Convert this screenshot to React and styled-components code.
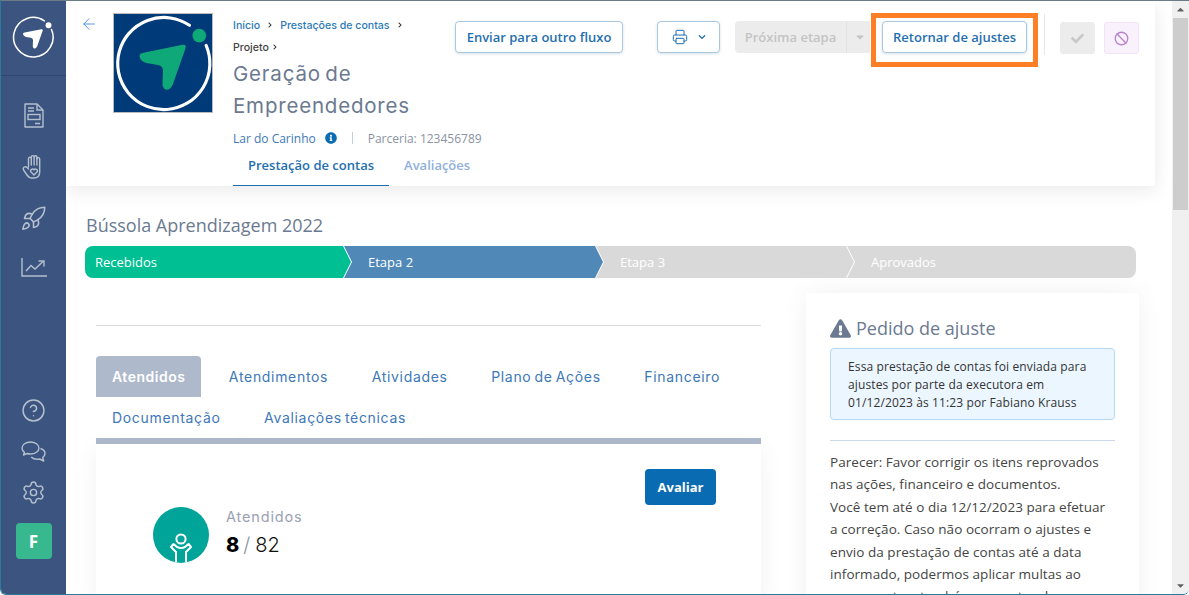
import React from "react";
import styled, { createGlobalStyle } from "styled-components";
import { ArrowLeft, Printer, Rocket, CircleHelp, Settings, Ban } from "lucide-react";
import { FaCheck, FaChevronDown, FaChevronRight, FaCaretDown, FaCaretUp, FaInfoCircle, FaExclamationTriangle } from "react-icons/fa";

const GlobalStyle = createGlobalStyle`
  html, body {
    margin: 0;
    background: #fff;
    font-family: "Open Sans", "Liberation Sans", sans-serif;
  }
  * { box-sizing: border-box; }
`;

const headingFont = `Inter, "Open Sans", sans-serif`;

const Frame = styled.div`
  display: flex;
  height: 100vh;
  overflow: hidden;
  border-top: 1px solid #6b7c85;
  border-left: 1px solid #2a7a9b;
  border-bottom: 1px solid #2a7a9b;
  border-radius: 0 0 6px 6px;
`;

const Sidebar = styled.aside`
  flex: 0 0 65px;
  display: flex;
  flex-direction: column;
  align-items: center;
  background: #3b5580;
  color: #b5bfce;
`;

const SideLogo = styled.div`
  width: 100%;
  height: 75px;
  flex: none;
  display: flex;
  align-items: center;
  justify-content: center;
  padding: 0 1px 2px 0;
  border-bottom: 1px solid #2f4670;
`;

const SideNav = styled.nav`
  display: flex;
  flex-direction: column;
  align-items: center;
  gap: 26px;
  padding-top: 27px;
`;

const SideFoot = styled.div`
  margin-top: auto;
  display: flex;
  flex-direction: column;
  align-items: center;
  gap: 18px;
  padding-bottom: 35px;
`;

const Avatar = styled.div`
  width: 36px;
  height: 36px;
  border-radius: 4px;
  background: #38b88f;
  color: #fff;
  font-weight: 700;
  font-size: 17px;
  display: flex;
  align-items: center;
  justify-content: center;
`;

const Main = styled.main`
  flex: 1;
  min-width: 0;
  overflow: hidden;
`;

const Header = styled.header`
  width: 1089px;
  height: 185px;
  display: flex;
  padding-left: 14px;
  background: #fff;
  box-shadow: 0 4px 18px rgba(0, 0, 0, 0.09);
`;

const BackButton = styled.button`
  flex: 0 0 33px;
  height: 32px;
  padding: 14px 0 0 0;
  border: 0;
  background: none;
  color: #3f8fd8;
  text-align: left;
`;

const LogoBox = styled.div`
  flex: none;
  width: 100px;
  height: 100px;
  margin-top: 12px;
  border: 1px solid #bbb;
  background: #003a78;
`;

const Info = styled.div`
  flex: 0 0 222px;
  min-width: 0;
  margin-left: 20px;
  padding-top: 13px;
  white-space: nowrap;
`;

const Crumbs = styled.div`
  display: flex;
  align-items: center;
  gap: 7px;
  height: 22px;
  font-family: ${headingFont};
  font-size: 10.6px;
  font-weight: 500;
  color: ${(p) => (p.$dark ? "#444" : "#2c7ab8")};

  svg { color: #333; }
`;

const ProjectTitle = styled.h1`
  margin: 0;
  font-family: ${headingFont};
  font-size: 20.5px;
  line-height: 32px;
  font-weight: 400;
  letter-spacing: 0.8px;
  word-spacing: -2px;
  color: #6b7a90;
`;

const SubLine = styled.div`
  display: flex;
  align-items: center;
  height: 18px;
  margin-top: 7px;
  font-size: 12px;
  color: #3d78b8;

  svg { flex: none; color: #0c6cb3; margin-left: 9px; }
`;

const SubDivider = styled.span`
  flex: none;
  width: 1px;
  height: 12px;
  margin: 0 15px;
  background: #c3cfdc;
`;

const Partner = styled.span`
  flex: none;
  color: #8a93a3;
`;

const HeaderTabs = styled.div`
  display: flex;
  margin-top: 8px;
`;

const HeaderTab = styled.div`
  flex: none;
  height: 31px;
  padding: 0 15px;
  font-size: 13px;
  line-height: 20px;
  font-weight: 600;
  color: ${(p) => (p.$active ? "#1f6fb0" : "#8fb0dc")};
  border-bottom: ${(p) => (p.$active ? "1px solid #1f6fb0" : "0")};
`;

const Actions = styled.div`
  display: flex;
  align-items: flex-start;
  padding-top: 20px;
`;

const OutlineButton = styled.button`
  position: relative;
  height: 32px;
  width: ${(p) => p.$width}px;
  margin-left: ${(p) => p.$gap || 0}px;
  padding: 0;
  display: flex;
  align-items: center;
  justify-content: center;
  gap: 10px;
  font-family: inherit;
  font-size: 13px;
  font-weight: 600;
  white-space: nowrap;
  color: #1f6fb0;
  background: #fff;
  border: 1px solid #a9c8e0;
  border-radius: 4px;
  box-shadow: 0 1px 3px rgba(60, 100, 140, 0.2);
`;

const Highlight = styled.span`
  position: absolute;
  left: -12px;
  right: -12px;
  top: -9px;
  bottom: -15px;
  border: 5px solid #ff7f27;
  pointer-events: none;
`;

const SplitButton = styled.div`
  display: flex;
  height: 32px;
  width: 135px;
  margin-left: 15px;
  background: #ececec;
  border-radius: 4px 0 0 4px;
  color: #c4c4c4;
  font-size: 13px;
  font-weight: 600;
`;

const SplitLabel = styled.span`
  flex: 0 0 112px;
  display: flex;
  align-items: center;
  justify-content: center;
  border-right: 1px solid #e2e2e2;
`;

const SplitCaret = styled.span`
  flex: 1;
  display: flex;
  align-items: center;
  padding-left: 7px;
`;

const ActionDivider = styled.span`
  width: 1px;
  height: 41px;
  margin: -7px 15px 0 17px;
  background: #e4e9ee;
`;

const SquareButton = styled.button`
  width: 35px;
  height: 32px;
  margin: 1px 0 0 ${(p) => p.$gap || 0}px;
  padding: 0;
  display: flex;
  align-items: center;
  justify-content: center;
  border-radius: 3px;
  border: 1px solid ${(p) => (p.$purple ? "#f0e4f6" : "#ececec")};
  background: ${(p) => (p.$purple ? "#f9f2fd" : "#ececec")};
  color: ${(p) => (p.$purple ? "#b884cf" : "#c8c8c8")};
`;

const Content = styled.div`
  padding: 27px 0 0 19px;
`;

const PageTitle = styled.h2`
  margin: 0 0 9px 1px;
  font-size: 18px;
  line-height: 24px;
  font-weight: 400;
  color: #6b7a90;
`;

const Progress = styled.div`
  display: flex;
  width: 1051px;
  height: 32px;
`;

const Step = styled.div`
  position: relative;
  flex: 0 0 ${(p) => p.$width}px;
  display: flex;
  align-items: center;
  padding-left: ${(p) => (p.$first ? 10 : 25)}px;
  font-size: 13px;
  color: #fff;
  background: ${(p) => p.$color};
  border-radius: ${(p) => (p.$first ? "8px 0 0 8px" : p.$last ? "0 8px 8px 0" : "0")};

  ${(p) =>
    !p.$last &&
    `
    &::before, &::after {
      content: "";
      position: absolute;
      top: 0;
      height: 100%;
      z-index: 1;
    }
    &::before {
      left: 100%;
      width: 9px;
      background: #fff;
      clip-path: polygon(0 0, 1px 0, 9px 50%, 1px 100%, 0 100%);
    }
    &::after {
      left: 100%;
      width: 8px;
      background: ${p.$color};
      clip-path: polygon(0 0, 100% 50%, 0 100%);
    }
  `}
`;

const Columns = styled.div`
  display: flex;
  gap: 45px;
  padding: 15px 0 0 11px;
`;

const LeftColumn = styled.section`
  flex: 0 0 665px;
  padding-top: 32px;
`;

const Rule = styled.hr`
  margin: ${(p) => p.$top || 0}px 0 0;
  border: 0;
  border-top: 1px solid ${(p) => p.$color || "#dddddd"};
`;

const Tabs = styled.div`
  display: flex;
  flex-wrap: wrap;
  column-gap: 11.5px;
  margin-top: 30px;
  border-bottom: 6px solid #aeb9cb;
`;

const Tab = styled.div`
  height: 41px;
  padding: 0 16px;
  display: flex;
  align-items: center;
  font-family: ${headingFont};
  font-size: 14px;
  letter-spacing: ${(p) => (p.$active ? 0.5 : 0.68)}px;
  word-spacing: -1.5px;
  font-weight: ${(p) => (p.$active ? 600 : 400)};
  color: ${(p) => (p.$active ? "#fff" : "#3d78b8")};
  background: ${(p) => (p.$active ? "#aeb9cb" : "#fff")};
  border-radius: 4px 4px 0 0;
`;

const Panel = styled.div`
  height: 160px;
  padding: 25px 45px 0 57px;
  background: #fff;
  box-shadow: 0 6px 24px rgba(0, 0, 0, 0.06);
`;

const PanelTop = styled.div`
  display: flex;
  justify-content: flex-end;
`;

const PrimaryButton = styled.button`
  width: 71px;
  height: 36px;
  border: 0;
  border-radius: 4px;
  background: #096cb3;
  color: #fff;
  font-family: inherit;
  font-size: 13px;
  font-weight: 700;
`;

const Stat = styled.div`
  display: flex;
  align-items: center;
  gap: 17px;
  margin-top: 2px;
`;

const StatIcon = styled.div`
  width: 56px;
  height: 56px;
  border-radius: 50%;
  background: #00a499;
  overflow: hidden;
`;

const StatText = styled.div`
  margin-top: -4px;
`;

const StatLabel = styled.div`
  font-family: ${headingFont};
  font-size: 14.5px;
  letter-spacing: 0.85px;
  color: #9a9fb5;
`;

const StatValue = styled.div`
  margin-top: 6px;
  font-family: ${headingFont};
  font-size: 20px;
  line-height: 28px;
  font-weight: 300;
  color: #111;

  b { font-weight: 800; color: #000; }
  i { font-style: normal; color: #8a93a3; margin: 0 5px 0 4px; }
`;

const AdjustCard = styled.aside`
  flex: 0 0 333px;
  height: 340px;
  padding: 23px 24px;
  border-radius: 4px;
  background: #fff;
  box-shadow: 0 0 28px rgba(0, 0, 0, 0.06);
`;

const AdjustTitle = styled.h3`
  margin: 0 0 8px;
  display: flex;
  align-items: center;
  gap: 5px;
  height: 24px;
  font-size: 18px;
  font-weight: 400;
  color: #6b7a90;
`;

const Notice = styled.div`
  height: 72px;
  padding: 9px 10px 0 17px;
  font-size: 12px;
  line-height: 18px;
  letter-spacing: 0.12px;
  color: #333;
  background: #ebf6ff;
  border: 1px solid #b9d7f0;
  border-radius: 4px;
`;

const Opinion = styled.p`
  margin: 10px 0 0;
  font-size: 13.5px;
  line-height: 22.4px;
  letter-spacing: 0.05px;
  color: #444;
`;

const Scrollbar = styled.div`
  flex: 0 0 17px;
  display: flex;
  flex-direction: column;
  align-items: center;
  background: #f0f0f0;
  color: #606060;
`;

const ScrollArrow = styled.div`
  flex: none;
  height: 17px;
  display: flex;
  align-items: center;
  justify-content: center;
`;

const ScrollThumb = styled.div`
  flex: 0 0 192px;
  width: 15px;
  background: #cdcdcd;
`;

const ScrollTrack = styled.div`
  flex: 1;
`;

function BrandMark({ size, ring, arrow, dot, width }) {
  return (
    <svg width={size} height={size} viewBox="0 0 100 100" style={{ display: "block" }}>
      <path
        d="M77 11.5A47 47 0 1 0 94 32"
        fill="none"
        stroke={ring}
        strokeWidth={width}
        strokeLinecap="round"
      />
      <circle cx="87" cy="22" r="7" fill={dot} />
      <path
        d="M26 43Q26 40 30 39.5L70 31.5Q74 31 73 35L60 72Q56 80 51 76Q49 74 49.5 70L50 58Q50 53 45 52L33 50Q27 48 26 43Z"
        fill={arrow}
      />
    </svg>
  );
}

const DocIcon = () => (
  <svg width="20" height="25" viewBox="0 0 20 25" fill="none" stroke="currentColor" strokeWidth="1.4">
    <path d="M1 1H13L19 7V24H1Z" strokeLinejoin="round" />
    <path d="M13 1V7H19M4 5H10M4 8H10" />
    <rect x="4" y="11.5" width="12" height="5" />
    <path d="M11 20.5H16" />
  </svg>
);

const HandIcon = () => (
  <svg width="23" height="25" viewBox="0 0 23 25" fill="none" stroke="currentColor" strokeWidth="1.4" strokeLinejoin="round" strokeLinecap="round">
    <path d="M6.5 13V4.5a1.4 1.4 0 0 1 2.8 0V3a1.4 1.4 0 0 1 2.8 0V3.2a1.4 1.4 0 0 1 2.8 0V5a1.4 1.4 0 0 1 2.8 0V18q0 6-6 6H10q-3 0-5-3L1.6 16q-1-2 .6-3 1.5-.8 2.8.6L6.5 15" />
    <path d="M9.3 4.5V11M12.1 3V11M14.9 3.2V11" />
    <path d="M12 21l-3.2-3.2a1.8 1.8 0 0 1 3.2-1.8 1.8 1.8 0 0 1 3.2 1.8Z" />
  </svg>
);

const ChartIcon = () => (
  <svg width="26" height="19" viewBox="0 0 26 19" fill="none" stroke="currentColor" strokeWidth="1.4">
    <path d="M1 0V18H26" />
    <path d="M5 13L10 7.5L14 11L22 3.5" />
    <path d="M17.5 3H23V8.5" />
  </svg>
);

const ChatIcon = () => (
  <svg width="25" height="21" viewBox="0 0 25 21" fill="none" stroke="currentColor" strokeWidth="1.4" strokeLinejoin="round">
    <path d="M9.5 1C4.8 1 1 3.6 1 7c0 1.7 1 3.2 2.4 4.3L2.5 14l3.6-1.5c1.1.4 2.2.5 3.4.5 4.7 0 8.5-2.6 8.5-6S14.2 1 9.5 1Z" />
    <path d="M19.5 7.5c2.6 1 4.5 2.8 4.5 5 0 1.6-.9 3-2.3 4l1 3.5-4-2c-.8.2-1.6.3-2.5.3-2.5 0-4.7-.9-6-2.3" />
  </svg>
);

const PersonIcon = () => (
  <svg width="56" height="56" viewBox="0 0 56 56" fill="none" stroke="#fff" strokeWidth="2" strokeLinejoin="round" style={{ display: "block" }}>
    <circle cx="28" cy="32" r="4.6" />
    <path d="M23 56V45L18 40L20.5 37L24 40Q28 42 32 40L35.5 37L38 40L33 45V56" />
  </svg>
);

const App = () => {
  return (
    <>
      <GlobalStyle />
      <Frame>
        <Sidebar>
          <SideLogo>
            <BrandMark size={42} ring="#fff" arrow="#fff" dot="#fff" width={3.6} />
          </SideLogo>
          <SideNav>
            <DocIcon />
            <HandIcon />
            <Rocket size={27} strokeWidth={1.4} />
            <ChartIcon />
          </SideNav>
          <SideFoot>
            <CircleHelp size={25} strokeWidth={1.4} />
            <ChatIcon />
            <Settings size={25} strokeWidth={1.4} />
            <Avatar>F</Avatar>
          </SideFoot>
        </Sidebar>

        <Main>
          <Header>
            <BackButton aria-label="Voltar">
              <ArrowLeft size={18} strokeWidth={1.2} />
            </BackButton>
            <LogoBox>
              <BrandMark size={98} ring="#fff" arrow="#0fa878" dot="#0fa878" width={3.2} />
            </LogoBox>
            <Info>
              <Crumbs>
                Início <FaChevronRight size={6} /> Prestações de contas <FaChevronRight size={6} />
              </Crumbs>
              <Crumbs $dark>
                Projeto <FaChevronRight size={6} style={{ marginLeft: -4 }} />
              </Crumbs>
              <ProjectTitle>
                Geração de
                <br />
                Empreendedores
              </ProjectTitle>
              <SubLine>
                Lar do Carinho
                <FaInfoCircle size={12} />
                <SubDivider />
                <Partner>Parceria: 123456789</Partner>
              </SubLine>
              <HeaderTabs>
                <HeaderTab $active>Prestação de contas</HeaderTab>
                <HeaderTab>Avaliações</HeaderTab>
              </HeaderTabs>
            </Info>
            <Actions>
              <OutlineButton $width={168}>Enviar para outro fluxo</OutlineButton>
              <OutlineButton $gap={34} $width={63}>
                <Printer size={16} strokeWidth={1.5} />
                <FaChevronDown size={8} />
              </OutlineButton>
              <SplitButton>
                <SplitLabel>Próxima etapa</SplitLabel>
                <SplitCaret>
                  <FaCaretDown size={12} />
                </SplitCaret>
              </SplitButton>
              <OutlineButton $gap={12} $width={145}>
                Retornar de ajustes
                <Highlight />
              </OutlineButton>
              <ActionDivider />
              <SquareButton>
                <FaCheck size={13} />
              </SquareButton>
              <SquareButton $purple $gap={9}>
                <Ban size={15} strokeWidth={2.2} />
              </SquareButton>
            </Actions>
          </Header>

          <Content>
            <PageTitle>Bússola Aprendizagem 2022</PageTitle>
            <Progress>
              <Step $first $width={258} $color="#00bf93">Recebidos</Step>
              <Step $width={252} $color="#5088b8">Etapa 2</Step>
              <Step $width={251} $color="#d9d9d9">Etapa 3</Step>
              <Step $last $width={290} $color="#d9d9d9">Aprovados</Step>
            </Progress>

            <Columns>
              <LeftColumn>
                <Rule />
                <Tabs>
                  <Tab $active>Atendidos</Tab>
                  <Tab>Atendimentos</Tab>
                  <Tab>Atividades</Tab>
                  <Tab>Plano de Ações</Tab>
                  <Tab>Financeiro</Tab>
                  <Tab>Documentação</Tab>
                  <Tab>Avaliações técnicas</Tab>
                </Tabs>
                <Panel>
                  <PanelTop>
                    <PrimaryButton>Avaliar</PrimaryButton>
                  </PanelTop>
                  <Stat>
                    <StatIcon>
                      <PersonIcon />
                    </StatIcon>
                    <StatText>
                      <StatLabel>Atendidos</StatLabel>
                      <StatValue>
                        <b>8</b>
                        <i>/</i>82
                      </StatValue>
                    </StatText>
                  </Stat>
                </Panel>
              </LeftColumn>

              <AdjustCard>
                <AdjustTitle>
                  <FaExclamationTriangle size={21} />
                  Pedido de ajuste
                </AdjustTitle>
                <Notice>
                  Essa prestação de contas foi enviada para ajustes por parte da executora em 01/12/2023 às 11:23 por Fabiano Krauss
                </Notice>
                <Rule $color="#c9d9ea" $top={20} />
                <Opinion>
                  Parecer: Favor corrigir os itens reprovados nas ações, financeiro e documentos.
                  <br />
                  Você tem até o dia 12/12/2023 para efetuar
                  <br />
                  a correção. Caso não ocorram o ajustes e envio da prestação de contas até a data informado, podermos aplicar multas ao proponente e também ao gestor do
                </Opinion>
              </AdjustCard>
            </Columns>
          </Content>
        </Main>

        <Scrollbar>
          <ScrollArrow><FaCaretUp size={11} /></ScrollArrow>
          <ScrollThumb />
          <ScrollTrack />
          <ScrollArrow><FaCaretDown size={11} /></ScrollArrow>
        </Scrollbar>
      </Frame>
    </>
  );
};

export default App;
